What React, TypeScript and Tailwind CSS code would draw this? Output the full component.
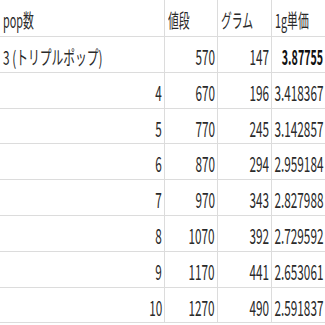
import React from 'react';

type Row = {
  pop: string;
  price: number;
  gram: number;
  unit: string;
  bold?: boolean;
  popLabel?: boolean;
  h: string;
};

const rows: Row[] = [
  { pop: '3 (トリプルポップ)', price: 570, gram: 147, unit: '3.87755', bold: true, popLabel: true, h: 'h-[36px]' },
  { pop: '4', price: 670, gram: 196, unit: '3.418367', h: 'h-[36px]' },
  { pop: '5', price: 770, gram: 245, unit: '3.142857', h: 'h-[35px]' },
  { pop: '6', price: 870, gram: 294, unit: '2.959184', h: 'h-[36px]' },
  { pop: '7', price: 970, gram: 343, unit: '2.827988', h: 'h-[36px]' },
  { pop: '8', price: 1070, gram: 392, unit: '2.729592', h: 'h-[36px]' },
  { pop: '9', price: 1170, gram: 441, unit: '2.653061', h: 'h-[36px]' },
  { pop: '10', price: 1270, gram: 490, unit: '2.591837', h: 'h-[35px]' },
];

const font = { fontFamily: '"Noto Sans CJK JP", "Noto Sans", sans-serif' };

// left aligned text cell
const TextCell = ({ children, first, wide }: { children: React.ReactNode; first?: boolean; wide?: boolean }) => (
  <div
    className={`flex items-center overflow-visible whitespace-nowrap pl-[3px] pt-[3px] ${first ? '' : 'border-l border-[#dcdcdc]'}`}
  >
    <span className={`inline-block origin-left text-[19px] leading-none ${wide ? 'scale-x-[0.62]' : 'scale-x-[0.57]'}`}>
      {children}
    </span>
  </div>
);

// right aligned number cell
const NumCell = ({ children, bold, first }: { children: React.ReactNode; bold?: boolean; first?: boolean }) => (
  <div
    className={`flex items-center justify-end whitespace-nowrap pr-[2px] pt-[4px] ${first ? '' : 'border-l border-[#dcdcdc]'}`}
  >
    <span
      className={`inline-block origin-right text-[21px] leading-none ${bold ? 'scale-x-[0.51] font-bold text-[#111]' : 'scale-x-[0.56]'}`}
    >
      {children}
    </span>
  </div>
);

export default function App() {
  return (
    <div className="w-[325px] h-[325px] bg-white text-[#2a2a2a] overflow-hidden" style={font}>
      <div className="grid grid-cols-[164px_53px_54px_54px] h-[37px] border-b border-[#dcdcdc]">
        <TextCell first>pop数</TextCell>
        <TextCell>値段</TextCell>
        <TextCell>グラム</TextCell>
        <TextCell>1g単価</TextCell>
      </div>
      {rows.map(r => (
        <div key={r.pop} className={`grid grid-cols-[164px_53px_54px_54px] ${r.h} border-b border-[#dcdcdc]`}>
          {r.popLabel ? (
            <TextCell first wide>
              {r.pop}
            </TextCell>
          ) : (
            <NumCell first>{r.pop}</NumCell>
          )}
          <NumCell>{r.price}</NumCell>
          <NumCell>{r.gram}</NumCell>
          <NumCell bold={r.bold}>{r.unit}</NumCell>
        </div>
      ))}
    </div>
  );
}
